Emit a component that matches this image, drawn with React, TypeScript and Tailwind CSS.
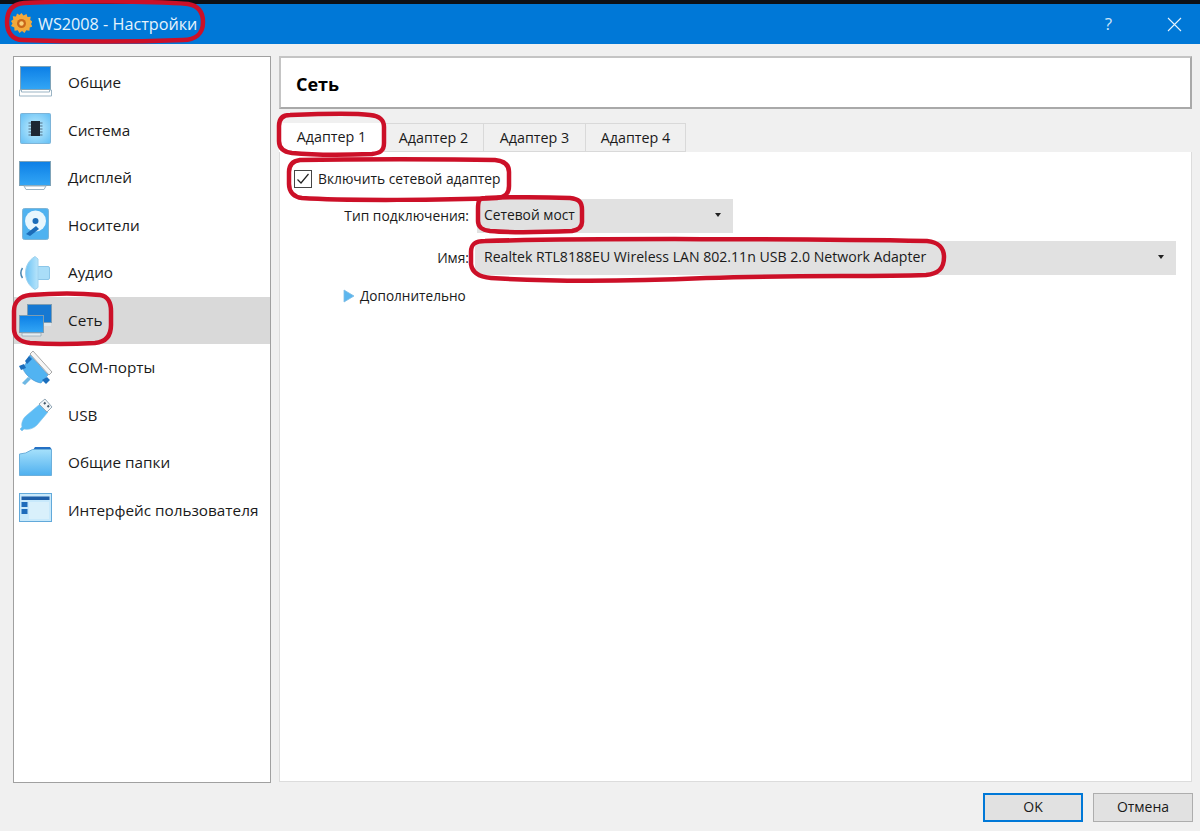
import type { ReactNode } from "react";

function MonitorIcon() {
  return (
    <svg width="38" height="36" viewBox="0 0 38 36">
      <defs>
        <linearGradient id="scr" x1="0" y1="0" x2="0" y2="1">
          <stop offset="0" stopColor="#0c7fe6" />
          <stop offset="1" stopColor="#33a6f5" />
        </linearGradient>
      </defs>
      <rect x="2.5" y="0.5" width="30" height="23" fill="url(#scr)" stroke="#7fa3b8" />
      <path d="M1.500 24h2v2h28v-2h2v6h-32z" fill="#fff" stroke="#9bb4c4" />
    </svg>
  );
}

function ChipIcon() {
  return (
    <svg width="38" height="36" viewBox="0 0 38 36">
      <defs>
        <radialGradient id="chp" cx="0.5" cy="0.5" r="0.7">
          <stop offset="0" stopColor="#c4eefe" />
          <stop offset="1" stopColor="#63bff5" />
        </radialGradient>
      </defs>
      <rect x="2.5" y="0.5" width="30" height="30" rx="1" fill="url(#chp)" stroke="#7db4d8" />
      <rect x="13" y="8" width="9" height="15" fill="#1d2733" />
      <path d="M10.500 10h2.500M10.500 13h2.500M10.500 16h2.500M10.500 19h2.500M10.500 22h2.500M22 10h2.500M22 13h2.500M22 16h2.500M22 19h2.500M22 22h2.500" stroke="#4d6a80" />
    </svg>
  );
}

function DisplayIcon() {
  return (
    <svg width="38" height="36" viewBox="0 0 38 36">
      <rect x="1.500" y="0.500" width="31" height="24" fill="url(#scr)" stroke="#7fa3b8" />
      <path d="M6 25h22l-2 3.500H8z" fill="#fff" stroke="#9bb4c4" />
    </svg>
  );
}

function DiskIcon() {
  return (
    <svg width="38" height="36" viewBox="0 0 38 36">
      <rect x="4.500" y="0.500" width="26" height="31" rx="2" fill="#4fb2f0" stroke="#7fb5d6" />
      <circle cx="17.500" cy="13" r="10.500" fill="#e8f6fd" />
      <circle cx="17.500" cy="13" r="3" fill="#1c6cb8" />
      <path d="M8 26l10-8 3 3-9 7z" fill="#1c6cb8" />
    </svg>
  );
}

function AudioIcon() {
  return (
    <svg width="38" height="36" viewBox="0 0 38 36">
      <defs>
        <linearGradient id="spk" x1="0" y1="0" x2="1" y2="0">
          <stop offset="0" stopColor="#6cc3f5" />
          <stop offset="1" stopColor="#b9e5fb" />
        </linearGradient>
      </defs>
      <rect x="18.500" y="10.500" width="13" height="13" rx="1.500" fill="#a9ddf8" stroke="#8cc6e8" />
      <path d="M17 0.500C11 4 7.500 10 7.500 17S11 30 17 33.500l3-2V3z" fill="url(#spk)" stroke="#9fd2ee" />
      <path d="M4.500 12c-2 3-2 7 0 10" fill="none" stroke="#4a86b0" strokeWidth="1.500" />
    </svg>
  );
}

function NetworkIcon() {
  return (
    <svg width="38" height="36" viewBox="0 0 38 36">
      <rect x="9.500" y="1.500" width="24" height="18" fill="#1678d2" stroke="#7c9cb2" />
      <path d="M26 20h7v3h-7z" fill="#dfe6ea" />
      <rect x="1.500" y="12.500" width="24" height="17" fill="url(#scr)" stroke="#7c9cb2" />
      <path d="M4 30h19v3H4z" fill="#e8edf0" stroke="#8ba5b6" strokeWidth="0.7" />
    </svg>
  );
}

function ComIcon() {
  return (
    <svg width="38" height="36" viewBox="0 0 38 36">
      <path d="M15 0l19 21-3 3L12 3z" fill="#f6f6f6" stroke="#a8a8a8" />
      <path d="M12 4l18 20-7 8c-7-1-15-7-18-14z" fill="#51b3f1" stroke="#3f8fcc" strokeWidth="0.6" />
      <path d="M7 10l4-5 3 3-5 5zM1 15l5-2 2 4-5 2zM24 29l5-3 3 3-4 4z" fill="#1b6ebc" />
      <path d="M10 26l-6 6 3 2 6-6z" fill="#6fb8e4" />
    </svg>
  );
}

function UsbIcon() {
  return (
    <svg width="38" height="36" viewBox="0 0 38 36">
      <path d="M22 6L30 14 19 27c-4 4-9 5-13 4l-2 2-2-2 2-2c-1-4 1-9 5-12z" fill="#5cbcf5" stroke="#7cc0e8" strokeWidth="0.6" />
      <path d="M27 1l7 8-5 5-8-8z" fill="#f2f5f7" stroke="#94a9b8" />
      <path d="M26 6l1.500-1.500M29.500 9l1.500-1.500" stroke="#44586a" strokeWidth="2" />
    </svg>
  );
}

function FolderIcon() {
  return (
    <svg width="38" height="36" viewBox="0 0 38 36">
      <defs>
        <linearGradient id="fld" x1="0" y1="0" x2="0" y2="1">
          <stop offset="0" stopColor="#a5e0fb" />
          <stop offset="1" stopColor="#4fb0ef" />
        </linearGradient>
      </defs>
      <path d="M17 1h15l1.500 2v4H13z" fill="#2470c4" />
      <path d="M1.500 29.500V8l6-1 7-3.500h19v26z" fill="url(#fld)" stroke="#6cb0dc" />
    </svg>
  );
}

function WindowIcon() {
  return (
    <svg width="38" height="36" viewBox="0 0 38 36">
      <rect x="1.500" y="0.500" width="32" height="28" fill="#c8e9fb" stroke="#62a9da" />
      <rect x="3.500" y="3.500" width="28" height="3.500" fill="#1f5fa8" />
      <rect x="3.500" y="9" width="6" height="5" fill="#1f6cbb" />
      <rect x="3.500" y="16" width="6" height="5" fill="#1f6cbb" />
      <rect x="11" y="9" width="20" height="17" fill="#d9f0fb" />
    </svg>
  );
}

const items: { label: string; icon: ReactNode; active?: boolean }[] = [
  { label: "Общие", icon: <MonitorIcon /> },
  { label: "Система", icon: <ChipIcon /> },
  { label: "Дисплей", icon: <DisplayIcon /> },
  { label: "Носители", icon: <DiskIcon /> },
  { label: "Аудио", icon: <AudioIcon /> },
  { label: "Сеть", icon: <NetworkIcon />, active: true },
  { label: "COM-порты", icon: <ComIcon /> },
  { label: "USB", icon: <UsbIcon /> },
  { label: "Общие папки", icon: <FolderIcon /> },
  { label: "Интерфейс пользователя", icon: <WindowIcon /> },
];

function Combo({ text, className }: { text: string; className: string }) {
  return (
    <div className={"flex h-[34px] items-center justify-between bg-[#e1e1e1] pl-[7px] pr-[12px] " + className}>
      <span>{text}</span>
      <span className="h-0 w-0 border-x-[3px] border-t-[4px] border-x-transparent border-t-[#222]" />
    </div>
  );
}

export default function App() {
  return (
    <div
      className="relative h-[831px] w-[1200px] overflow-hidden bg-[#f0f0f0] text-[15.300px] text-[#1a1a1a]"
      style={{ fontFamily: '"Open Sans", "Noto Sans", sans-serif' }}
    >
      <div className="h-[4px] bg-[#0d1117]" />
      <div className="flex h-[40px] items-center justify-between bg-[#0078d7] pl-[11px] pr-[18px] text-white">
        <div className="flex items-center gap-[6px]">
          <svg width="21" height="21" viewBox="0 0 21 21">
            <path
              d="M10.500 0l2 2.500 3-1.500 1 3 3.200-.2-.5 3.200 2.300 1.500-1.500 2.500 1.500 2.500-2.800 1-.2 3.200-3.200-.4-1.800 2.700-2.500-2-2.500 2-1.800-2.700-3.200.4-.2-3.200L0 13l1.500-2.500L0 8l2.300-1.500L1.800 3.300 5 3.500l1-3 2.500 1.500z"
              fill="#f2a93b"
            />
            <circle cx="10.500" cy="10.500" r="4.500" fill="#c9661a" />
            <circle cx="10.500" cy="10.500" r="2.200" fill="#f8d27a" />
          </svg>
          <span className="text-[16.200px] text-[#e6f3fc]">WS2008 - Настройки</span>
        </div>
        <div className="flex items-center gap-[55px]">
          <span className="text-[17px] text-[#cfe6f8]">?</span>
          <svg width="15" height="15" viewBox="0 0 15 15" stroke="#e6f3fc" strokeWidth="1.100">
            <path d="M1 1l13 13M14 1L1 14" />
          </svg>
        </div>
      </div>

      <div className="flex gap-[8px] pl-[13px] pt-[12px]">
        <div className="h-[727px] w-[258px] border border-[#a0a0a0] bg-white pt-[2px]">
          {items.map((it) => (
            <div
              key={it.label}
              className={"flex h-[47.5px] items-center pl-[4px] " + (it.active ? "bg-[#d9d9d9]" : "")}
            >
              <div className="flex w-[50px] shrink-0 pt-[2px]">{it.icon}</div>
              <span className="whitespace-nowrap">{it.label}</span>
            </div>
          ))}
        </div>

        <div className="w-[913px]">
          <div className="flex h-[53px] items-center border-2 border-[#a9a9a9] border-l-[#c4c4c4] border-t-[#c4c4c4] bg-white pl-[15px] pt-[4px] text-[18px] font-bold text-black">
            Сеть
          </div>
          <div className="mt-[14px] flex h-[29px] text-[14.300px]">
            <div className="flex w-[105px] items-center justify-center bg-white pb-[1px]">Адаптер 1</div>
            <div className="flex w-[100px] items-center justify-center border-y border-r border-[#d9d9d9] bg-[#f0f0f0]">Адаптер 2</div>
            <div className="flex w-[102px] items-center justify-center border-y border-r border-[#d9d9d9] bg-[#f0f0f0]">Адаптер 3</div>
            <div className="flex w-[100px] items-center justify-center border-y border-r border-[#d9d9d9] bg-[#f0f0f0]">Адаптер 4</div>
          </div>
          <div className="h-[630px] border border-t-0 border-[#dcdcdc] bg-white pl-[14px] pt-[17px] text-[13.800px]">
            <div className="flex items-center gap-[6px]">
              <span className="flex h-[18px] w-[18px] items-center justify-center border border-[#444] bg-white">
                <svg width="14" height="14" viewBox="0 0 14 14" fill="none" stroke="#222" strokeWidth="1.200">
                  <path d="M1.500 7.500L5 11l7.500-9" />
                </svg>
              </span>
              <span className="leading-[20px]">Включить сетевой адаптер</span>
            </div>
            <div className="mt-[10px] flex items-center">
              <span className="w-[175px] whitespace-nowrap text-right">Тип подключения:</span>
              <Combo text="Сетевой мост" className="ml-[8px] w-[256px] pb-[2px]" />
            </div>
            <div className="mt-[8px] flex items-center">
              <span className="w-[175px] text-right">Имя:</span>
              <Combo
                text="Realtek RTL8188EU Wireless LAN 802.11n USB 2.0 Network Adapter"
                className="ml-[6px] w-[701px] pl-[9px] pb-[2px] text-[14.100px]"
              />
            </div>
            <div className="mt-[11px] flex items-center pl-[49px] text-[13.600px]">
              <svg width="12" height="14" viewBox="0 0 12 14" className="mr-[5px]">
                <path d="M1 1l10 6-10 6z" fill="#5cb6ee" stroke="#7fbde4" strokeWidth="0.800" />
              </svg>
              <span>Дополнительно</span>
            </div>
          </div>
        </div>
      </div>

      <div className="flex justify-end gap-[10px] pr-[7px] pt-[10px] text-[14px]">
        <button className="h-[29px] w-[100px] border-2 border-[#0078d7] bg-[#e1e1e1] pb-[2px]">OK</button>
        <button className="h-[29px] w-[100px] border border-[#adadad] bg-[#e1e1e1] pb-[2px]">Отмена</button>
      </div>

      {/* red marker strokes over the screenshot */}
      <svg className="pointer-events-none absolute left-0 top-0" width="1200" height="831" fill="none" stroke="#cc1028" strokeWidth="4.500">
        <path d="M24 3C70 1 150 1 188 4c12 2 15 10 15 18 0 12-8 18-20 18-50 2-110 2-160 0C12 40 7 32 7 22 7 10 13 4 24 3z" />
        <path d="M30 295c25-2 50-2 70 0 8 1 11 8 11 16v14c0 11-5 17-16 18-20 1-50 1-65 0-10-1-16-6-16-14v-18c0-9 6-15 16-16z" />
        <path d="M290 115c25-1 65-2 80 0 9 1 14 4 14 12v16c0 8-4 10-12 11-25 1-60 1-80-1-8-1-13-5-13-12v-15c0-7 3-11 11-11z" />
        <path d="M300 160c50-1 150-1 195 0 10 1 14 5 14 12v14c0 7-3 11-12 12-50 2-150 3-195 0-8-1-13-6-13-14v-12c0-7 4-11 11-12z" />
        <path d="M485 198c25-1 60-1 85 0 9 1 12 4 12 12v12c0 5-4 8-10 9-25 1-60 2-82 0-7-1-12-3-12-10v-12c0-8 1-11 7-11z" />
        <path d="M485 241c100-3 330-2 442 0 12 1 17 8 17 16 0 12-6 17-18 18-60 2-120 0-220 3-70 3-150 4-215 0-12-1-19-6-20-14l0-12c0-8 4-11 14-11z" />
      </svg>
    </div>
  );
}
